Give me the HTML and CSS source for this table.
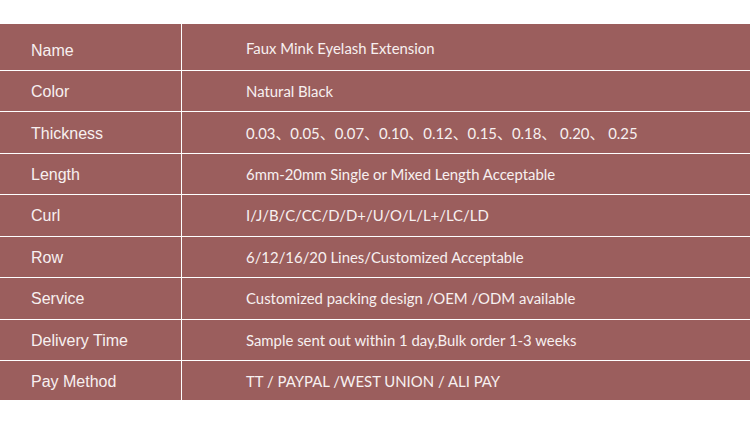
FILE: index.html
```html
<!DOCTYPE html>
<html>
<head>
<meta charset="utf-8">
<link rel="stylesheet" href="styles.css">
</head>
<body>
<div class="spec">
  <div class="row first"><div class="label">Name</div><div class="value">Faux Mink Eyelash Extension</div></div>
  <div class="row"><div class="label">Color</div><div class="value">Natural Black</div></div>
  <div class="row"><div class="label">Thickness</div><div class="value">0.03、0.05、0.07、0.10、0.12、0.15、0.18、 0.20、 0.25</div></div>
  <div class="row"><div class="label">Length</div><div class="value">6mm-20mm Single or Mixed Length Acceptable</div></div>
  <div class="row"><div class="label">Curl</div><div class="value">I/J/B/C/CC/D/D+/U/O/L/L+/LC/LD</div></div>
  <div class="row"><div class="label">Row</div><div class="value">6/12/16/20 Lines/Customized Acceptable</div></div>
  <div class="row"><div class="label">Service</div><div class="value">Customized packing design /OEM /ODM available</div></div>
  <div class="row"><div class="label">Delivery Time</div><div class="value">Sample sent out within 1 day,Bulk order 1-3 weeks</div></div>
  <div class="row last"><div class="label">Pay Method</div><div class="value">TT / PAYPAL /WEST UNION / ALI PAY</div></div>
</div>
</body>
</html>
```
FILE: styles.css
```css
html, body { margin: 0; padding: 0; background: #fff; }
body { padding-top: 24px; width: 750px; height: 426px; box-sizing: border-box; overflow: hidden; }
.spec { background: #9b5e5d; color: #f7f0f0; }
.row { display: flex; height: 41.43px; box-sizing: border-box; border-bottom: 1px solid #fff; padding-top: 2px; }
.row.first { height: 47px; padding-top: 5px; }
.row.last { border-bottom: none; height: 39.5px; }
.label { width: 182px; box-sizing: border-box; border-right: 1px solid #fff; margin-top: -5px; padding-top: 7px; padding-left: 31px; display: flex; align-items: center; font-family: "Liberation Sans", Arial, sans-serif; font-size: 16px; }
.row:not(.first) .label { margin-top: -2px; padding-top: 2px; }
.value { flex: 1; padding-left: 64px; padding-bottom: 2px; display: flex; align-items: center; font-family: "Lato", "Noto Sans CJK SC", sans-serif; font-size: 14.9px; }
.row.first .value { padding-bottom: 4px; }
```
